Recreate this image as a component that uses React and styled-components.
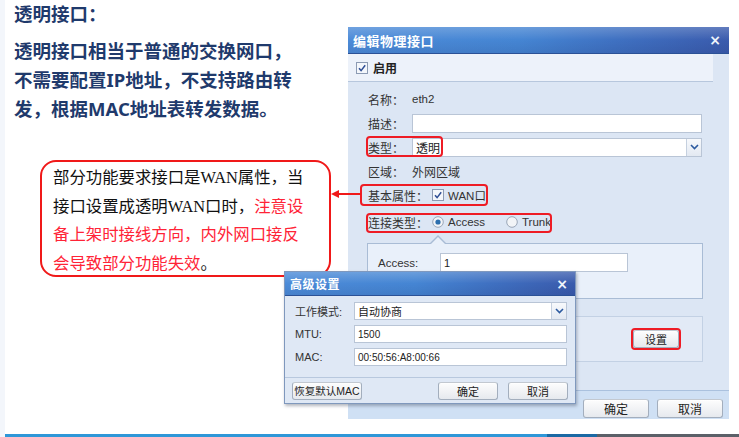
import React from "react";
import styled, { createGlobalStyle } from "styled-components";

const Global = createGlobalStyle`
  html, body { margin: 0; padding: 0; background: #ffffff; }
  #root { width: 739px; height: 437px; }
`;

const UI_FONT = `"Liberation Sans", "Noto Sans CJK SC", sans-serif`;

const Slide = styled.div`
  position: relative;
  width: 739px;
  height: 437px;
  overflow: hidden;
  box-sizing: border-box;
  padding-left: 5px;
  background: linear-gradient(90deg, #f3f6fb 0 5px, #ffffff 5px);
  display: flex;
  flex-direction: column;
`;

const Stage = styled.div`
  flex: 1;
  min-height: 0;
  display: flex;
`;

const BottomLine = styled.div`
  height: 3px;
  flex: none;
  background: linear-gradient(90deg, #2f97d8 0 542px, #1b69a4 542px 592px, #5b6068 592px);
`;

const LeftCol = styled.div`
  width: 343px;
  flex: none;
  box-sizing: border-box;
  padding-left: 9px;
  display: flex;
  flex-direction: column;
  align-items: flex-start;
`;

const Heading = styled.div`
  font: 700 18.5px/28px "Noto Sans", "Noto Sans CJK SC", sans-serif;
  color: #1f3a6c;
  white-space: nowrap;
`;

const Lead = styled.div`
  margin-top: 8px;
  font: 700 18.5px/29px "Noto Sans", "Noto Sans CJK SC", sans-serif;
  color: #1f3a6c;
  white-space: nowrap;
`;

const Callout = styled.div`
  margin: 37px 0 0 26px;
  width: 291px;
  height: 117px;
  box-sizing: border-box;
  border: 2px solid #f01919;
  border-radius: 16px;
  padding: 2px 0 0 11px;
  font: 400 16.4px/28.5px "Liberation Serif", "Noto Sans CJK SC", serif;
  color: #111111;
  white-space: nowrap;
`;

const Warn = styled.span`
  color: #ff2437;
`;

const Arrow = styled.svg`
  position: absolute;
  left: 331px;
  top: 189px;
`;

/* ---------- windows ---------- */

const Window = styled.div`
  width: ${(p) => p.$w}px;
  height: ${(p) => p.$h}px;
  box-sizing: border-box;
  display: flex;
  flex-direction: column;
  background: #dce6f4;
  font-family: ${UI_FONT};
  color: #2b2b2b;
`;

const MainWindow = styled(Window)`
  margin-top: 27px;
  flex: none;
`;

const Popup = styled(Window)`
  position: absolute;
  left: 284px;
  top: 271px;
  border: 1px solid #7f98bd;
  background: #dfe8f5;
  box-shadow: 1px 2px 3px rgba(40, 50, 70, 0.35);
`;

const TitleBar = styled.div`
  height: ${(p) => p.$h}px;
  flex: none;
  box-sizing: border-box;
  display: flex;
  align-items: center;
  justify-content: space-between;
  padding: 0 ${(p) => p.$pr}px 0 5px;
  border-bottom: 1px solid #2b5196;
  background:
    linear-gradient(180deg, rgba(255, 255, 255, 0.2), rgba(255, 255, 255, 0) 50%, rgba(0, 0, 40, 0.08)),
    linear-gradient(90deg, #4c8bd8 0%, #4585d3 45%, #3f71c2 70%, #3a5bad 100%);
  color: #ffffff;
`;

const TitleText = styled.span`
  font-size: ${(p) => p.$fs}px;
  font-weight: 700;
  letter-spacing: 0.5px;
`;

const Close = styled.span`
  font: 700 14px/1 "DejaVu Sans", sans-serif;
  color: #eef3fb;
`;

const Toolbar = styled.div`
  height: 28px;
  flex: none;
  box-sizing: border-box;
  margin-right: 16px;
  display: flex;
  align-items: center;
  gap: 5px;
  padding-left: 8px;
  background: #edf2fa;
  border-bottom: 1px solid #b7c7dd;
  font-size: 12px;
  font-weight: 700;
  color: #222222;
`;

const Form = styled.div`
  padding: 7px 27px 0 20px;
  display: flex;
  flex-direction: column;
`;

const Row = styled.div`
  position: relative;
  height: 20px;
  margin-top: ${(p) => (p.$mt === undefined ? 4 : p.$mt)}px;
  display: grid;
  grid-template-columns: ${(p) => p.$lw || 44}px 1fr;
  align-items: center;
  font-size: 12px;
`;

const Label = styled.span`
  color: #333333;
  white-space: nowrap;
  font-size: ${(p) => p.$fs || 12}px;
`;

const Value = styled.span`
  color: #333333;
  white-space: nowrap;
  font-size: ${(p) => p.$fs || 12}px;
`;

const Field = styled.div`
  height: ${(p) => p.$h || 19}px;
  box-sizing: border-box;
  border: 1px solid #b9c5d6;
  background: #ffffff;
  display: flex;
  align-items: center;
  padding-left: 3px;
  font-size: ${(p) => p.$fs || 11}px;
  color: #222222;
  white-space: nowrap;
  overflow: hidden;
`;

const DropBtn = styled.span`
  margin-left: auto;
  width: 15px;
  height: 100%;
  flex: none;
  box-sizing: border-box;
  border-left: 1px solid #c5d0df;
  background: linear-gradient(#f7f9fc, #e3e9f2);
  display: flex;
  align-items: center;
  justify-content: center;
`;

const Highlight = styled.span`
  position: absolute;
  left: ${(p) => p.$l}px;
  top: ${(p) => p.$t}px;
  width: ${(p) => p.$w}px;
  height: ${(p) => p.$h}px;
  box-sizing: border-box;
  border: 2px solid #ee1c25;
  border-radius: 4px;
  pointer-events: none;
`;

const Choices = styled.div`
  display: flex;
  align-items: center;
`;

const Choice = styled.span`
  display: inline-flex;
  align-items: center;
  gap: 4px;
  width: ${(p) => (p.$w ? `${p.$w}px` : "auto")};
  font-size: 11.5px;
  color: #333333;
  white-space: nowrap;
`;

const SubPanel = styled.div`
  position: relative;
  margin: ${(p) => p.$mt}px -1px 0 -1px;
  height: ${(p) => p.$h}px;
  box-sizing: border-box;
  border: 1px solid ${(p) => p.$border};
  background: ${(p) => p.$bg};
`;

const Notch = styled.span`
  position: absolute;
  left: 61px;
  top: -9px;
  width: 0;
  height: 0;
  border-left: 9px solid transparent;
  border-right: 9px solid transparent;
  border-bottom: 9px solid #a9bcd5;
  &::after {
    content: "";
    position: absolute;
    left: -8px;
    top: 1.5px;
    border-left: 8px solid transparent;
    border-right: 8px solid transparent;
    border-bottom: 8px solid #e9f0fa;
  }
`;

const AccessGrid = styled.div`
  padding: 9px 0 0 10px;
  display: grid;
  grid-template-columns: 62px 188px;
  align-items: center;
  font-size: 12px;
`;

const SetArea = styled(SubPanel)`
  display: flex;
  align-items: center;
  justify-content: flex-end;
  padding-right: 21px;
`;

const RedFrame = styled.span`
  display: inline-flex;
  padding: 0;
  border: 2px solid #ee1c25;
  border-radius: 4px;
`;

const Button = styled.button`
  width: ${(p) => p.$w}px;
  height: ${(p) => p.$h}px;
  box-sizing: border-box;
  padding: 0;
  margin: 0;
  border: 1px solid #a3aebd;
  border-top-color: #c2c8d0;
  border-radius: 3px;
  background: linear-gradient(#fdfdfd, #e6e9ee);
  box-shadow: 0 1px 0 rgba(255, 255, 255, 0.7) inset;
  font-family: ${UI_FONT};
  font-size: ${(p) => p.$fs || 12}px;
  color: #222222;
  display: inline-flex;
  align-items: center;
  justify-content: center;
  white-space: nowrap;
`;

const Footer = styled.div`
  margin-top: auto;
  height: 29px;
  flex: none;
  box-sizing: border-box;
  border-top: 1px solid #aac1de;
  background: #cfe0f4;
  display: flex;
  justify-content: flex-end;
  align-items: flex-start;
  gap: 8px;
  padding: 8px 6px 0 0;
`;

const PopBody = styled.div`
  padding: 6px 8px 0 10px;
  display: flex;
  flex-direction: column;
  gap: 5px;
`;

const PopRow = styled.div`
  display: grid;
  grid-template-columns: 59px 1fr;
  align-items: center;
  height: 18px;
`;

const PopFooter = styled.div`
  margin-top: auto;
  height: 26px;
  flex: none;
  box-sizing: border-box;
  border-top: 1px solid #b8c8de;
  display: flex;
  align-items: center;
  justify-content: space-between;
  padding: 0 7px;
`;

const BtnGroup = styled.div`
  display: flex;
  gap: 10px;
`;

/* ---------- drawings ---------- */

const CheckBox = () => (
  <svg width="12" height="12" viewBox="0 0 12 12" style={{ flex: "none" }}>
    <rect x="0.5" y="0.5" width="11" height="11" fill="#f4f7fb" stroke="#8c9bb3" />
    <path d="M3 6.2 L5.1 8.6 L9.2 3.3" fill="none" stroke="#2f4f95" strokeWidth="1.5" />
  </svg>
);

const Radio = ({ on }) => (
  <svg width="12" height="12" viewBox="0 0 12 12" style={{ flex: "none" }}>
    <circle cx="6" cy="6" r="5.3" fill="#f2f4f7" stroke="#9aa6b7" />
    {on && <circle cx="6" cy="6" r="2.6" fill="#2d6fae" />}
  </svg>
);

const Chevron = () => (
  <svg width="9" height="6" viewBox="0 0 9 6">
    <path d="M1 1 L4.5 4.5 L8 1" fill="none" stroke="#2c5aa0" strokeWidth="1.6" />
  </svg>
);

export default function App() {
  return (
    <>
      <Global />
      <Slide>
        <Stage>
          <LeftCol>
            <Heading>透明接口：</Heading>
            <Lead>
              透明接口相当于普通的交换网口，
              <br />
              不需要配置IP地址，不支持路由转
              <br />
              发，根据MAC地址表转发数据。
            </Lead>
            <Callout>
              部分功能要求接口是WAN属性，当
              <br />
              接口设置成透明WAN口时，<Warn>注意设</Warn>
              <br />
              <Warn>备上架时接线方向，内外网口接反</Warn>
              <br />
              <Warn>会导致部分功能失效</Warn>。
            </Callout>
          </LeftCol>

          <MainWindow $w={381} $h={392}>
            <TitleBar $h={27} $pr={8}>
              <TitleText $fs={13}>编辑物理接口</TitleText>
              <Close>×</Close>
            </TitleBar>
            <Toolbar>
              <CheckBox />
              <span>启用</span>
            </Toolbar>
            <Form>
              <Row $mt={0}>
                <Label>名称：</Label>
                <Value $fs={11.5}>eth2</Value>
              </Row>
              <Row>
                <Label>描述：</Label>
                <Field />
              </Row>
              <Row>
                <Label>类型：</Label>
                <Field $fs={12}>
                  透明
                  <DropBtn>
                    <Chevron />
                  </DropBtn>
                </Field>
                <Highlight $l={-2} $t={-1} $w={77} $h={21} />
              </Row>
              <Row>
                <Label>区域：</Label>
                <Value>外网区域</Value>
              </Row>
              <Row $lw={64}>
                <Label>基本属性：</Label>
                <Choice>
                  <CheckBox />
                  WAN口
                </Choice>
                <Highlight $l={-8} $t={-1} $w={128} $h={22} />
              </Row>
              <Row $lw={64} $mt={7}>
                <Label>连接类型：</Label>
                <Choices>
                  <Choice $w={74}>
                    <Radio on />
                    Access
                  </Choice>
                  <Choice>
                    <Radio />
                    Trunk
                  </Choice>
                </Choices>
                <Highlight $l={-2} $t={1} $w={186} $h={20} />
              </Row>
              <SubPanel $mt={11} $h={56} $border="#a9bcd5" $bg="#e9f0fa">
                <Notch />
                <AccessGrid>
                  <Label $fs={11.5}>Access:</Label>
                  <Field $fs={11}>1</Field>
                </AccessGrid>
              </SubPanel>
              <SetArea $mt={17} $h={46} $border="#c3d1e4" $bg="#e2eaf6">
                <RedFrame>
                  <Button $w={46} $h={18} $fs={11}>
                    设置
                  </Button>
                </RedFrame>
              </SetArea>
            </Form>
            <Footer>
              <Button $w={66} $h={19}>
                确定
              </Button>
              <Button $w={66} $h={19}>
                取消
              </Button>
            </Footer>
          </MainWindow>
        </Stage>
        <BottomLine />

        <Arrow width="30" height="10" viewBox="0 0 30 10">
          <line x1="6" y1="5" x2="30" y2="5" stroke="#f01919" strokeWidth="2" />
          <path d="M0 5 L8 1 L8 9 Z" fill="#f01919" />
        </Arrow>

        <Popup $w={292} $h={133}>
          <TitleBar $h={24} $pr={7}>
            <TitleText $fs={12}>高级设置</TitleText>
            <Close>×</Close>
          </TitleBar>
          <PopBody>
            <PopRow>
              <Label $fs={11}>工作模式:</Label>
              <Field $h={18} $fs={11}>
                自动协商
                <DropBtn>
                  <Chevron />
                </DropBtn>
              </Field>
            </PopRow>
            <PopRow>
              <Label $fs={11}>MTU:</Label>
              <Field $h={18} $fs={10}>
                1500
              </Field>
            </PopRow>
            <PopRow>
              <Label $fs={11}>MAC:</Label>
              <Field $h={18} $fs={10}>
                00:50:56:A8:00:66
              </Field>
            </PopRow>
          </PopBody>
          <PopFooter>
            <Button $w={70} $h={18} $fs={10.5}>
              恢复默认MAC
            </Button>
            <BtnGroup>
              <Button $w={60} $h={18} $fs={11}>
                确定
              </Button>
              <Button $w={60} $h={18} $fs={11}>
                取消
              </Button>
            </BtnGroup>
          </PopFooter>
        </Popup>
      </Slide>
    </>
  );
}
